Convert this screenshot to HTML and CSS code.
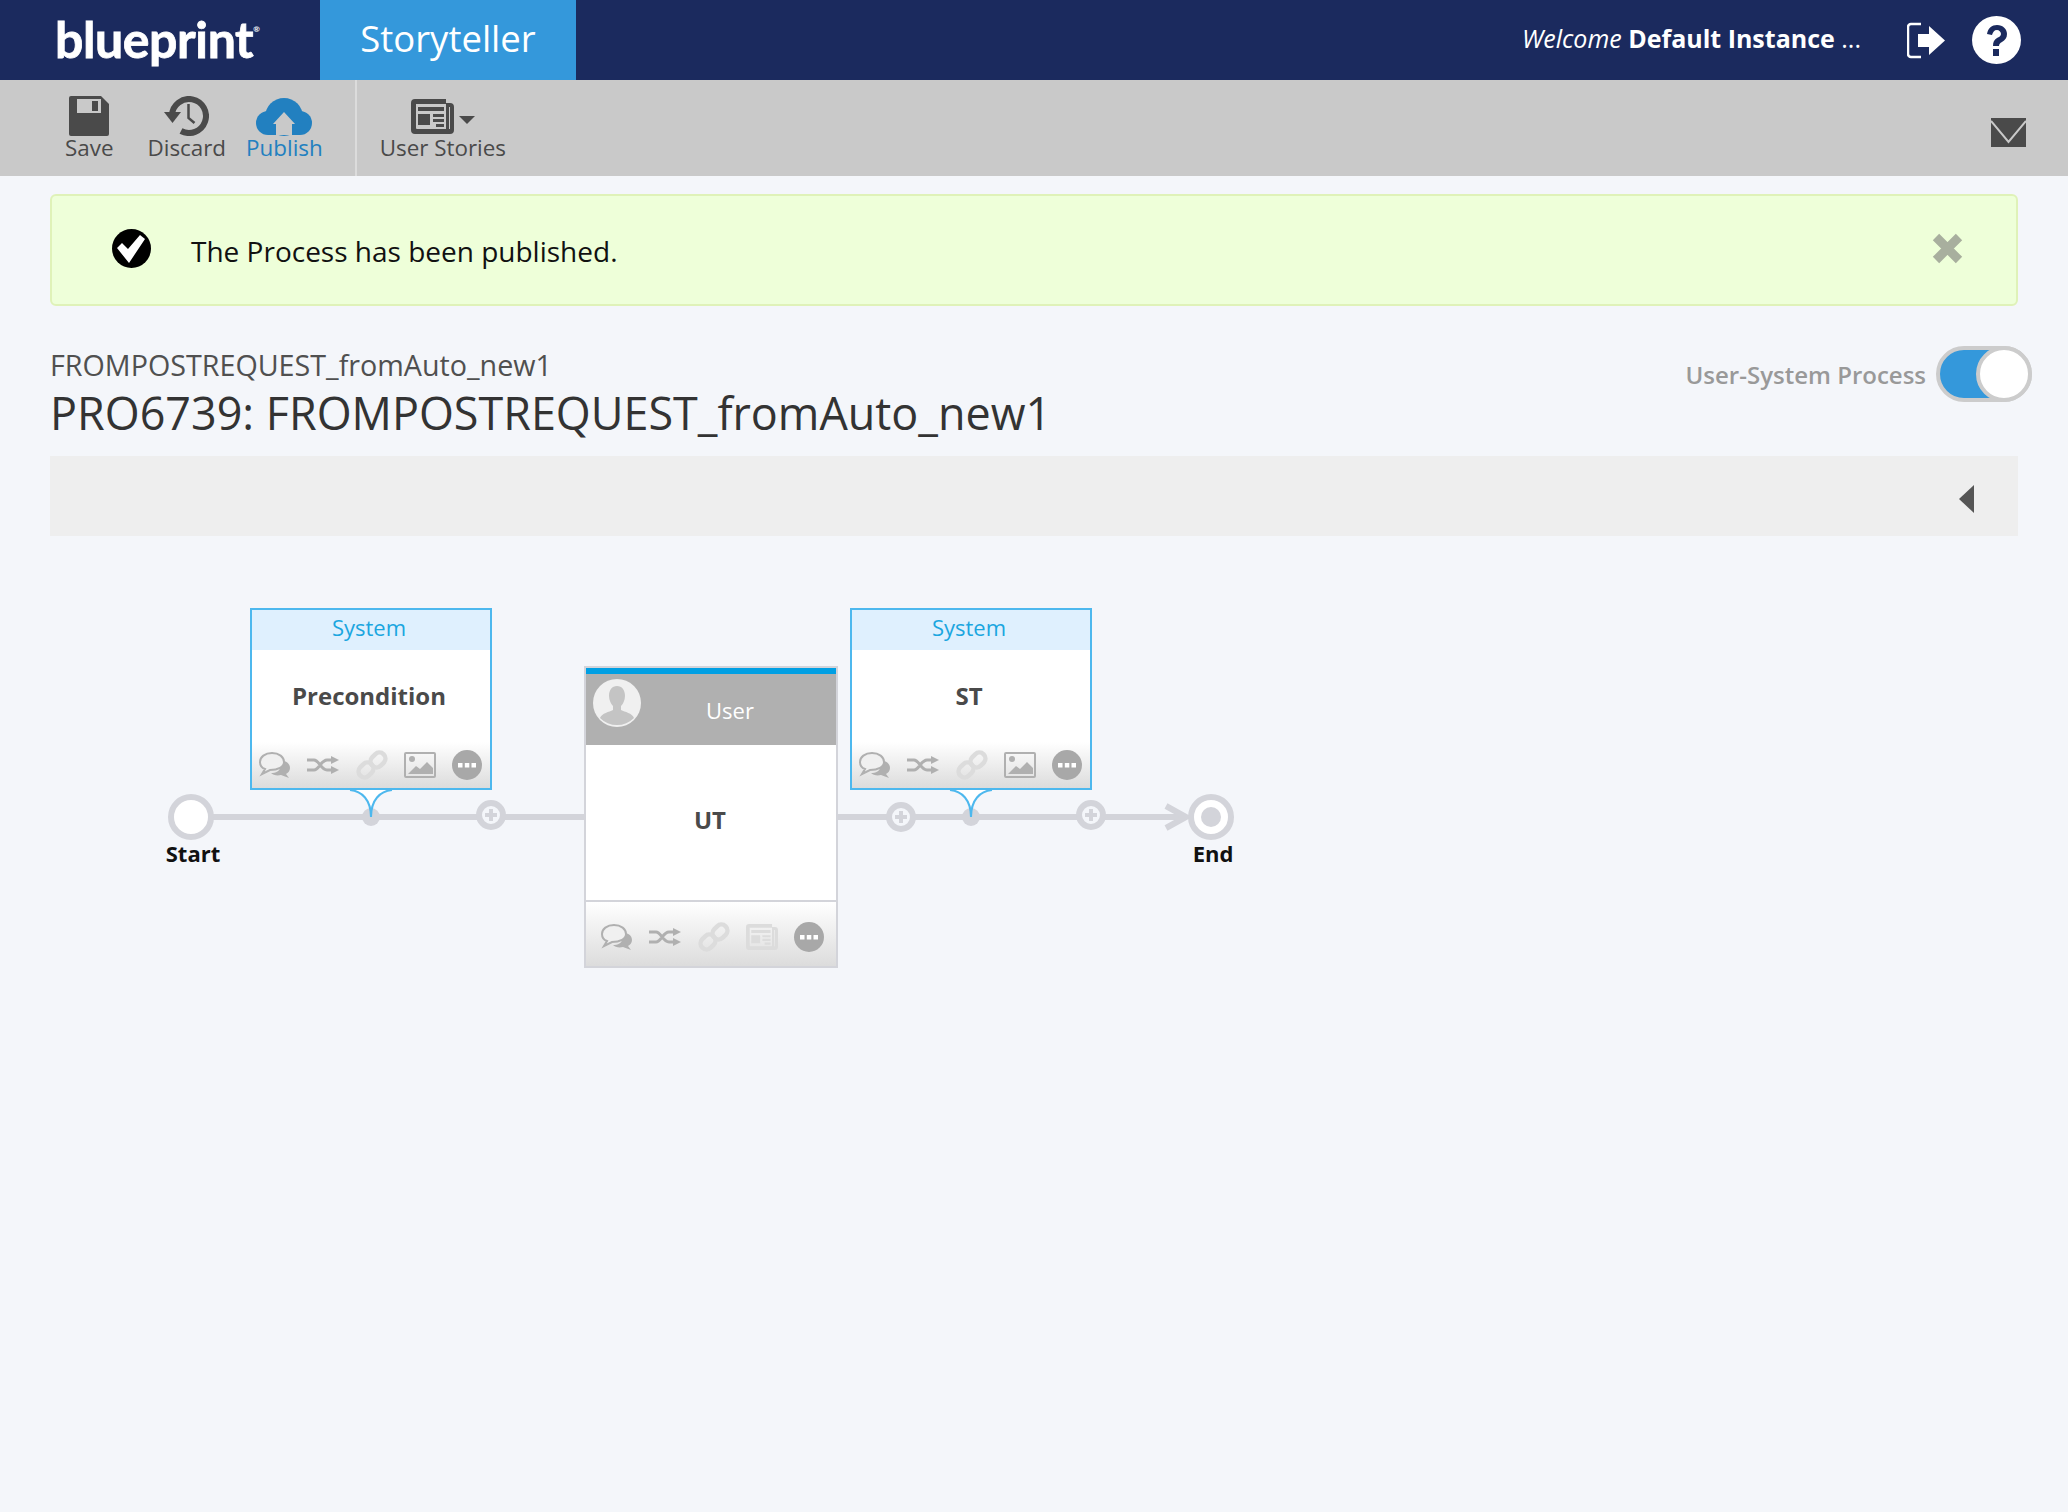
FILE: index.html
```html
<!DOCTYPE html>
<html lang="en">
<head>
    <meta charset="UTF-8">
    <meta name="viewport" content="width=device-width, initial-scale=1.0">
    <title>Blueprint - Storyteller</title>
    <link rel="stylesheet" href="styles.css">
</head>
<body>

<!-- shared icons for the diagram cards -->
<svg class="icon-defs" width="0" height="0">
    <symbol id="i-comment" viewBox="0 0 32 26">
        <path d="M20 9c6-1 11 2 11 7 0 3-2 5-4 6l3 4-8-3c-4 1-8 0-10-2 5 0 9-2 9-6 0-2 0-4-1-6z" fill="currentColor"/>
        <path d="M13 1C6 1 1 5 1 10c0 3 2 6 5 7l-3 5 8-4c8 0 14-3 14-8 0-5-5-9-12-9z" fill="#f0f0f0" stroke="currentColor" stroke-width="2"/>
    </symbol>
    <symbol id="i-shuffle" viewBox="0 0 32 18">
        <path d="M0 4h7c5 0 7 10 13 10h5M0 14h7c5 0 7-10 13-10h5" fill="none" stroke="currentColor" stroke-width="3"/>
        <path d="M24 0l8 4-8 4zM24 10l8 4-8 4z" fill="currentColor"/>
    </symbol>
    <symbol id="i-link" viewBox="0 0 32 32">
        <g fill="none" stroke="currentColor" stroke-width="4.500">
            <rect x="2" y="15" width="16" height="12" rx="6" transform="rotate(-45 10 21)"/>
            <rect x="14" y="5" width="16" height="12" rx="6" transform="rotate(-45 22 11)"/>
        </g>
    </symbol>
    <symbol id="i-image" viewBox="0 0 32 26">
        <rect x="1" y="1" width="30" height="24" rx="1" fill="none" stroke="currentColor" stroke-width="2"/>
        <circle cx="8" cy="7" r="3" fill="currentColor"/>
        <path d="M4 22l8-8 4 3 7-7 6 6v6z" fill="currentColor"/>
    </symbol>
    <symbol id="i-news" viewBox="0 0 43 35">
        <path d="M4 0h31v4h4a4 4 0 0 1 4 4v23a4 4 0 0 1-4 4H4a4 4 0 0 1-4-4V4a4 4 0 0 1 4-4zM5 5v24a1 1 0 0 0 1 1h29V5zM39 8v22h-1V8z" fill="currentColor" fill-rule="evenodd"/>
        <path d="M7 8h26v4H7zM7 15h12v11H7zM22 15h11v3H22zM22 20h11v3H22zM25 25h8v3h-8z" fill="currentColor"/>
    </symbol>
    <symbol id="i-more" viewBox="0 0 30 30">
        <circle cx="15" cy="15" r="15" fill="currentColor"/>
        <path d="M6 13h4.500v4.500H6zM12.800 13h4.500v4.500h-4.500zM19.500 13H24v4.500h-4.500z" fill="#fff"/>
    </symbol>
</svg>

<header class="topbar">
    <div class="logo">blueprint<span class="logo-mark">®</span></div>
    <div class="app-tab">Storyteller</div>
    <div class="user-area">
        <span class="welcome"><em>Welcome</em> <strong>Default Instance</strong> ...</span>
        <svg class="exit-icon" viewBox="0 0 38 37">
            <path d="M14 2H4a3 3 0 0 0-3 3v27a3 3 0 0 0 3 3h10" fill="none" stroke="#fff" stroke-width="2.500"/>
            <path d="M11 12h11V4l16 14.500L22 33v-8H11z" fill="#fff"/>
        </svg>
        <svg class="help-icon" viewBox="0 0 49 48">
            <ellipse cx="24.500" cy="24" rx="24.500" ry="24" fill="#fff"/>
            <path d="M15 18c1-6 5-9 10-9 6 0 10 4 10 9 0 4-2 6-5 8-2 1-3 2-3 4h-6c0-4 1-6 4-8 2-1 4-2 4-4s-2-4-4-4c-3 0-4 2-5 5z" fill="#1b2a5e"/>
            <rect x="21" y="33" width="6" height="7" fill="#1b2a5e"/>
        </svg>
    </div>
</header>

<nav class="toolbar">
    <div class="tool tool-save">
        <svg class="tool-icon" width="40" height="40" viewBox="0 0 40 40">
            <path d="M2 0h30l8 8v30a2 2 0 0 1-2 2H2a2 2 0 0 1-2-2V2a2 2 0 0 1 2-2z" fill="#4a4a4a"/>
            <path d="M8 3h24v14H8z" fill="#c9c9c9"/>
            <path d="M23 5h6v10h-6z" fill="#4a4a4a"/>
        </svg>
        <span>Save</span>
    </div>
    <div class="tool tool-discard">
        <svg class="tool-icon" width="45" height="40" viewBox="0 0 45 40">
            <path d="M8 19A17 17 0 1 1 17 35" fill="none" stroke="#4a4a4a" stroke-width="6"/>
            <path d="M0 16h17L8.500 27z" fill="#4a4a4a"/>
            <path d="M24.500 8v14l6 5" fill="none" stroke="#4a4a4a" stroke-width="2.500"/>
        </svg>
        <span>Discard</span>
    </div>
    <div class="tool tool-publish">
        <svg class="tool-icon" width="56" height="40" viewBox="0 0 56 40">
            <circle cx="12" cy="27" r="12" fill="#2280c0"/>
            <circle cx="44" cy="27" r="12" fill="#2280c0"/>
            <circle cx="28" cy="21" r="19" fill="#2280c0"/>
            <rect x="12" y="27" width="32" height="12" fill="#2280c0"/>
            <path d="M28 16l11 12h-3v11H20V28h-3z" fill="#c9c9c9"/>
        </svg>
        <span>Publish</span>
    </div>
    <div class="toolbar-divider"></div>
    <div class="tool tool-stories">
        <div class="stories-icon">
            <svg width="43" height="35"><use href="#i-news"/></svg>
            <span class="caret"></span>
        </div>
        <span>User Stories</span>
    </div>
    <svg class="mail-icon" viewBox="0 0 35 29">
        <rect width="35" height="29" fill="#4a4a4a"/>
        <path d="M0 3l17.500 21L35 3" fill="none" stroke="#c9c9c9" stroke-width="2"/>
    </svg>
</nav>

<main>
    <div class="content">
        <div class="alert">
            <svg class="alert-check" viewBox="0 0 39 39">
                <circle cx="19.500" cy="19.500" r="19.500" fill="#000"/>
                <path d="M5 19l5-5 6 6L28 6l5 4L17 34z" fill="#fff"/>
            </svg>
            <span class="alert-text">The Process has been published.</span>
            <svg class="alert-close" viewBox="0 0 33 33">
                <path d="M5 5l23 23M28 5L5 28" stroke="#a8af9e" stroke-width="9" fill="none"/>
            </svg>
        </div>

        <div class="title-row">
            <div>
                <div class="sub-title">FROMPOSTREQUEST_fromAuto_new1</div>
                <h1>PRO6739: FROMPOSTREQUEST_fromAuto_new1</h1>
            </div>
            <div class="process-toggle">
                <span>User-System Process</span>
                <div class="toggle"><div class="toggle-knob"></div></div>
            </div>
        </div>

        <div class="filter-bar"><span class="collapse-arrow"></span></div>
    </div>

    <div class="diagram">
        <!-- connector lines sit behind the nodes -->
        <svg class="wires" width="1300" height="500">
            <g stroke="#d3d4da" stroke-width="6" fill="none">
                <path d="M200 281H590M830 281H1180"/>
                <path d="M1166 270l20 11-20 11"/>
            </g>
            <circle cx="371" cy="281" r="9" fill="#d3d4da"/>
            <circle cx="971" cy="281" r="9" fill="#d3d4da"/>
            <g fill="#fff" stroke="none">
                <path d="M350 253c12 1 21 12 21 28 0-16 9-27 21-28z"/>
                <path d="M950 253c12 1 21 12 21 28 0-16 9-27 21-28z"/>
            </g>
            <g fill="none" stroke="#4db8ee" stroke-width="2">
                <path d="M350 254c12 1 21 10 21 27 0-17 9-26 21-27"/>
                <path d="M950 254c12 1 21 10 21 27 0-17 9-26 21-27"/>
            </g>
        </svg>

        <div class="event start-event"></div>
        <div class="event-label start-label">Start</div>
        <div class="event end-event"><div class="end-dot"></div></div>
        <div class="event-label end-label">End</div>

        <div class="plus plus-1"></div>
        <div class="plus plus-2"></div>
        <div class="plus plus-3"></div>

        <div class="task system-task task-pre">
            <div class="system-head">System</div>
            <div class="task-name">Precondition</div>
            <div class="task-foot">
                <svg class="ic-comment"><use href="#i-comment"/></svg>
                <svg class="ic-shuffle"><use href="#i-shuffle"/></svg>
                <svg class="ic-link"><use href="#i-link"/></svg>
                <svg class="ic-image"><use href="#i-image"/></svg>
                <svg class="ic-more"><use href="#i-more"/></svg>
            </div>
        </div>

        <div class="task user-task">
            <div class="user-head">
                <svg class="avatar" viewBox="0 0 48 48">
                    <circle cx="24" cy="24" r="24" fill="#f0f0f0"/>
                    <path d="M24 7c5 0 8 4 8 10 0 4-2 8-4 10v4c4 2 11 3 13 8a24 24 0 0 1-34 0c2-5 9-6 13-8v-4c-2-2-4-6-4-10 0-6 3-10 8-10z" fill="#c4c4c4"/>
                </svg>
                <span>User</span>
            </div>
            <div class="task-name user-name">UT</div>
            <div class="task-foot user-foot">
                <svg class="ic-comment"><use href="#i-comment"/></svg>
                <svg class="ic-shuffle"><use href="#i-shuffle"/></svg>
                <svg class="ic-link"><use href="#i-link"/></svg>
                <svg class="ic-news"><use href="#i-news"/></svg>
                <svg class="ic-more"><use href="#i-more"/></svg>
            </div>
        </div>

        <div class="task system-task task-st">
            <div class="system-head">System</div>
            <div class="task-name">ST</div>
            <div class="task-foot">
                <svg class="ic-comment"><use href="#i-comment"/></svg>
                <svg class="ic-shuffle"><use href="#i-shuffle"/></svg>
                <svg class="ic-link"><use href="#i-link"/></svg>
                <svg class="ic-image"><use href="#i-image"/></svg>
                <svg class="ic-more"><use href="#i-more"/></svg>
            </div>
        </div>
    </div>
</main>

</body>
</html>
```

FILE: styles.css
```css
body {
    font-family: 'Open Sans', sans-serif;
    background-color: #f4f6fa;
    color: #333;
    margin: 0;
    padding: 0;
    overflow: hidden;
}

.icon-defs {
    position: absolute;
}

/* top bar */
.topbar {
    display: flex;
    align-items: center;
    height: 80px;
    background-color: #1b2a5e;
    color: #fff;
}

.logo {
    width: 320px;
    flex: none;
    padding-left: 55px;
    box-sizing: border-box;
    font-family: 'Lato', sans-serif;
    font-weight: 700;
    font-size: 50px;
    letter-spacing: -0.400px;
    line-height: 80px;
    margin-top: -22px;
    height: 80px;
    -webkit-text-stroke: 0.800px #fff;
}

.logo-mark {
    font-size: 8px;
    vertical-align: 26px;
    letter-spacing: 0;
    -webkit-text-stroke: 0;
}

.app-tab {
    width: 256px;
    height: 80px;
    line-height: 76px;
    text-align: center;
    background-color: #3498db;
    font-size: 36.500px;
}

.user-area {
    display: flex;
    align-items: center;
    margin-left: auto;
    padding-right: 47px;
}

.welcome {
    font-size: 25px;
    margin: -4px 46px 0 0;
}

.exit-icon {
    width: 38px;
    height: 37px;
    margin-right: 27px;
}

.help-icon {
    width: 49px;
    height: 48px;
}

/* toolbar */
.toolbar {
    display: flex;
    height: 96px;
    background-color: #c9c9c9;
    color: #4a4a4a;
    padding-left: 65px;
    box-sizing: border-box;
    font-size: 22.400px;
    position: relative;
}

.tool {
    display: flex;
    flex-direction: column;
    align-items: center;
    padding-top: 16px;
}

.tool span {
    line-height: 30px;
    margin-top: -3px;
}

.tool-icon {
    display: block;
}

.tool-save {
    margin-right: 34px;
}

.tool-discard {
    margin-right: 20px;
}

.tool-publish {
    color: #2280c0;
    margin-right: 32px;
}

.toolbar-divider {
    width: 2px;
    background-color: #dcdcdc;
}

.tool-stories {
    margin-left: 23px;
}

.stories-icon {
    display: flex;
    align-items: center;
    height: 40px;
}

.stories-icon svg {
    margin-top: 1px;
}

.stories-icon .caret {
    width: 0;
    height: 0;
    margin: 8px 0 0 5px;
    border-left: 8px solid transparent;
    border-right: 8px solid transparent;
    border-top: 8px solid #4a4a4a;
}

.mail-icon {
    width: 35px;
    height: 29px;
    margin: 38px 42px 0 auto;
}

/* message and titles */
.content {
    margin: 0 50px;
}

.alert {
    display: flex;
    align-items: center;
    height: 112px;
    margin-top: 18px;
    padding: 0 52px 0 60px;
    box-sizing: border-box;
    background-color: #eeffd9;
    border: 2px solid #dff2b8;
    border-radius: 6px;
}

.alert-check {
    width: 39px;
    height: 39px;
    margin: -3px 40px 0 0;
}

.alert-text {
    font-size: 28px;
    color: #111;
    margin-top: 2px;
}

.alert-close {
    width: 33px;
    height: 33px;
    margin: -4px 0 0 auto;
}

.title-row {
    display: flex;
    justify-content: space-between;
    height: 150px;
    box-sizing: border-box;
    padding-top: 41px;
}

.sub-title {
    font-size: 28.700px;
    font-weight: 500;
    line-height: 35px;
    color: #505050;
}

h1 {
    margin: 0;
    font-size: 44.900px;
    font-weight: 400;
    line-height: 61px;
    color: #333;
}

.process-toggle {
    display: flex;
    align-items: flex-start;
    margin: -1px -14px 0 0;
    color: #999;
    font-size: 24px;
    font-weight: 600;
}

.process-toggle span {
    margin: 12px 10px 0 0;
}

.toggle {
    width: 96px;
    height: 56px;
    box-sizing: border-box;
    border: 4px solid #ccc;
    border-radius: 28px;
    background-color: #3498db;
    position: relative;
}

.toggle-knob {
    position: absolute;
    top: -4px;
    right: -4px;
    width: 56px;
    height: 56px;
    box-sizing: border-box;
    border: 4px solid #ccc;
    border-radius: 50%;
    background-color: #fff;
}

.filter-bar {
    display: flex;
    align-items: center;
    justify-content: flex-end;
    height: 80px;
    padding-right: 44px;
    background-color: #eee;
}

.collapse-arrow {
    width: 0;
    height: 0;
    margin-top: 6px;
    border-top: 14px solid transparent;
    border-bottom: 14px solid transparent;
    border-right: 15px solid #555;
}

/* process diagram, nodes are placed on a canvas */
.diagram {
    position: relative;
    height: 976px;
}

.wires {
    position: absolute;
    top: 0;
    left: 0;
}

.event {
    position: absolute;
    top: 258px;
    width: 46px;
    height: 46px;
    box-sizing: border-box;
    border: 6px solid #d3d4da;
    border-radius: 50%;
    background-color: #fff;
    display: flex;
    align-items: center;
    justify-content: center;
}

.start-event {
    left: 168px;
}

.end-event {
    left: 1188px;
}

.end-dot {
    width: 20px;
    height: 20px;
    border-radius: 50%;
    background-color: #d3d4da;
}

.event-label {
    position: absolute;
    top: 302px;
    width: 80px;
    text-align: center;
    font-size: 22px;
    font-weight: 700;
    line-height: 30px;
    color: #111;
}

.start-label {
    left: 153px;
}

.end-label {
    left: 1173px;
}

.plus {
    position: absolute;
    width: 30px;
    height: 30px;
    box-sizing: border-box;
    border: 6px solid #d3d4da;
    border-radius: 50%;
    background-color: #f4f6fa;
}

.plus::before,
.plus::after {
    content: "";
    position: absolute;
    background-color: #d3d4da;
}

.plus::before {
    left: 3px;
    top: 7px;
    width: 12px;
    height: 4px;
}

.plus::after {
    left: 7px;
    top: 3px;
    width: 4px;
    height: 12px;
}

.plus-1 {
    left: 476px;
    top: 264px;
}

.plus-2 {
    left: 886px;
    top: 266px;
}

.plus-3 {
    left: 1076px;
    top: 264px;
}

.task {
    position: absolute;
    box-sizing: border-box;
    background-color: #fff;
    display: flex;
    flex-direction: column;
}

.system-task {
    top: 72px;
    height: 182px;
    border: 2px solid #4db8ee;
}

.task-pre {
    left: 250px;
    width: 242px;
}

.task-st {
    left: 850px;
    width: 242px;
}

.system-head {
    height: 40px;
    line-height: 35px;
    text-align: center;
    padding-right: 4px;
    background-color: #dff0fe;
    color: #1ba6e0;
    font-size: 22px;
}

.task-name {
    flex: 1;
    display: flex;
    align-items: center;
    justify-content: center;
    font-size: 24px;
    font-weight: 700;
    color: #4a4a4a;
    padding: 0 4px 2px 0;
}

.task-foot {
    display: flex;
    align-items: center;
    justify-content: space-between;
    height: 46px;
    padding: 0 8px 0 7px;
    background: linear-gradient(#fff, #dcdcdc);
    color: #b0b0b0;
}

.ic-comment {
    width: 32px;
    height: 26px;
}

.ic-shuffle {
    width: 32px;
    height: 18px;
}

.ic-link {
    width: 32px;
    height: 32px;
    color: #dcdcdc;
}

.ic-image {
    width: 32px;
    height: 26px;
}

.ic-news {
    width: 32px;
    height: 26px;
    color: #dcdcdc;
}

.ic-more {
    width: 30px;
    height: 30px;
    color: #a8a8a8;
}

.user-task {
    left: 584px;
    top: 130px;
    width: 254px;
    height: 302px;
    border: 2px solid #d3d4da;
}

.user-head {
    display: flex;
    align-items: flex-start;
    height: 77px;
    box-sizing: border-box;
    border-top: 6px solid #009fe3;
    background-color: #b0b0b0;
    color: #fff;
    font-size: 22px;
    padding: 5px 0 0 7px;
}

.avatar {
    width: 48px;
    height: 48px;
}

.user-head span {
    margin: 16px 0 0 65px;
}

.user-name {
    padding: 0 2px 7px 0;
}

.user-foot {
    height: 66px;
    border-top: 2px solid #d3d4da;
    padding: 6px 12px 0 15px;
    box-sizing: border-box;
}
```
